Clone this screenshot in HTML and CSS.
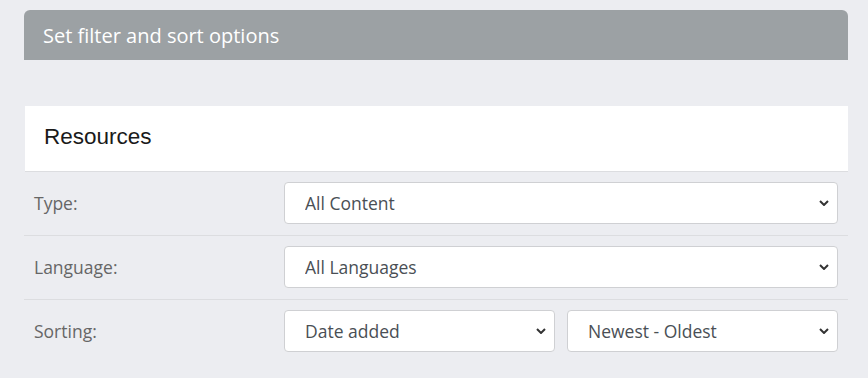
FILE: index.html
```html
<!DOCTYPE html>
<html lang="en">
<head>
<meta charset="UTF-8" />
<title>Filter options</title>
<link rel="stylesheet" href="styles.css">
</head>
<body>

<div class="panel">
  <div class="panel-head">Set filter and sort options</div>

  <div class="card">
    <h3 class="card-title">Resources</h3>
  </div>

  <div class="filter-row">
    <label for="type">Type:</label>
    <div class="fields">
      <div class="select-wrap">
        <select id="type">
          <option>All Content</option>
        </select>
        <svg class="chev" viewBox="0 0 10 6" width="10" height="6"><path d="M1 1l4 4 4-4" fill="none" stroke="#333" stroke-width="2"/></svg>
      </div>
    </div>
  </div>

  <div class="filter-row">
    <label for="lang">Language:</label>
    <div class="fields">
      <div class="select-wrap">
        <select id="lang">
          <option>All Languages</option>
        </select>
        <svg class="chev" viewBox="0 0 10 6" width="10" height="6"><path d="M1 1l4 4 4-4" fill="none" stroke="#333" stroke-width="2"/></svg>
      </div>
    </div>
  </div>

  <div class="filter-row last">
    <label for="sort">Sorting:</label>
    <div class="fields two">
      <div class="select-wrap">
        <select id="sort">
          <option>Date added</option>
        </select>
        <svg class="chev" viewBox="0 0 10 6" width="10" height="6"><path d="M1 1l4 4 4-4" fill="none" stroke="#333" stroke-width="2"/></svg>
      </div>
      <div class="select-wrap">
        <select id="order">
          <option>Newest - Oldest</option>
        </select>
        <svg class="chev" viewBox="0 0 10 6" width="10" height="6"><path d="M1 1l4 4 4-4" fill="none" stroke="#333" stroke-width="2"/></svg>
      </div>
    </div>
  </div>
</div>

</body>
</html>
```

FILE: styles.css
```css
body {
  margin: 0;
  background: #ecedf1;
  font-family: "Open Sans", Arial, sans-serif;
  color: #555;
}
.panel {
  width: 824px;
  margin-left: 24px;
  padding-top: 10px;
}
.panel-head {
  height: 50px;
  line-height: 52px;
  padding-left: 19px;
  background: #9ca1a4;
  color: #fff;
  font-size: 20px;
  border-radius: 6px 6px 0 0;
}
.card {
  margin-top: 46px;
  margin-left: 1px;
  background: #fff;
  height: 65px;
  border-bottom: 1px solid #dcdde0;
  display: flex;
  align-items: center;
}
.card-title {
  margin: 0 0 4px 19px;
  font-family: "Liberation Sans", Arial, sans-serif;
  font-weight: normal;
  font-size: 22.5px;
  color: #1a1a1a;
}
.filter-row {
  display: grid;
  grid-template-columns: 250px 1fr;
  align-items: center;
  padding: 10px 10px 11px 10px;
  border-bottom: 1px solid #dcdde0;
}
.filter-row.last {
  border-bottom: none;
}
.filter-row label {
  font-size: 17.5px;
  color: #666;
}
.fields {
  display: flex;
  gap: 12px;
}
.select-wrap {
  position: relative;
  flex: 1;
}
select {
  appearance: none;
  -webkit-appearance: none;
  width: 100%;
  height: 42px;
  padding: 0 30px 0 20px;
  border: 1px solid #cfd0d3;
  border-radius: 4px;
  background: #fff;
  font-family: "Open Sans", Arial, sans-serif;
  font-size: 17.5px;
  color: #4a4f55;
  outline: none;
}
.chev {
  position: absolute;
  right: 9px;
  top: 18px;
  pointer-events: none;
}
```
